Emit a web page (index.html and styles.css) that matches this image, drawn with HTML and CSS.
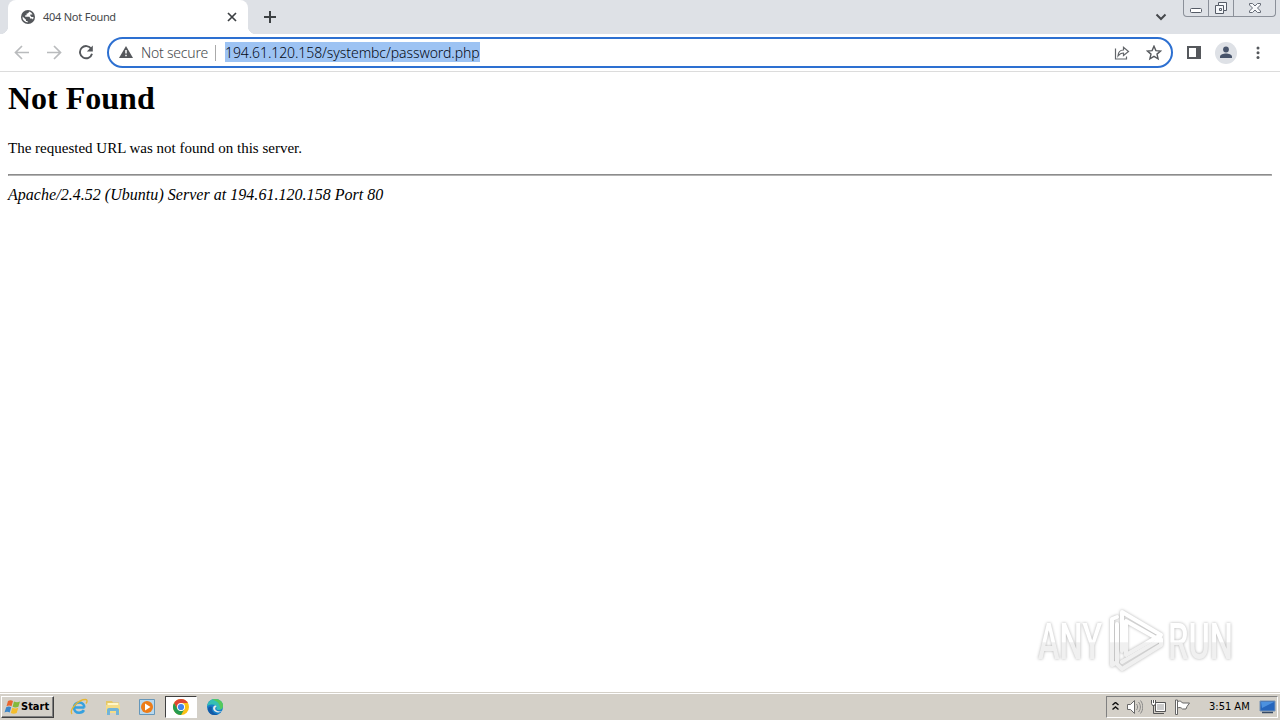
FILE: index.html
```html
<!DOCTYPE html>
<html lang="en">
  <head>
    <meta charset="utf-8">
    <title>404 Not Found</title>
    <link rel="stylesheet" href="styles.css">
  </head>
  <body>
    <div class="tab-strip">
      <div class="tab">
        <svg class="globe" width="14" height="14" viewBox="0 0 14 14"><circle cx="7" cy="7" r="7" fill="#54575b"/><path d="M8 1.600C7.800 3 7 3.600 5.600 3.600v1.600H4.200v1.600h3.600c1 0 1.200.6 1.200 1.600h1.400c.8 0 1.200.4 1.500 1.100A5.500 5.500 0 0 0 12.500 7H10.500L9.300 5.700V4.500h2.300A5.500 5.500 0 0 0 8 1.600z" fill="#fff"/><path d="M1.500 6.500 5 9.800v1.300h1.600v1.400A5.500 5.500 0 0 1 1.500 6.500z" fill="#fff"/></svg>
        <span class="tab-title">404 Not Found</span>
        <svg class="tab-close" width="10" height="10" viewBox="0 0 10 10"><path d="m1 1 8 8m0-8L1 9" stroke="#3c4043" stroke-width="1.7"/></svg>
      </div>
      <svg class="new-tab" width="12" height="12" viewBox="0 0 12 12"><path d="M6 0v12M0 6h12" stroke="#3c4043" stroke-width="2"/></svg>
      <svg class="tab-search" width="12" height="8" viewBox="0 0 12 8"><path d="m1.500 1.500 4.500 4.500 4.500-4.500" fill="none" stroke="#45484c" stroke-width="2"/></svg>
      <div class="window-buttons">
        <span><svg width="13" height="14" viewBox="0 0 13 14"><rect x=".5" y="7.500" width="11" height="4" rx="1" fill="#fff" stroke="#555b66"/></svg></span>
        <span><svg width="14" height="14" viewBox="0 0 14 14"><path d="M4.500 1.500h8v8h-3v3h-8v-8h3z" fill="#f5f7fa" stroke="#555b66"/><path d="M4.500 4.500h5v5M5.500 7.500h2v2h-2z" fill="none" stroke="#555b66"/></svg></span>
        <span><svg width="14" height="12" viewBox="0 0 14 12"><path d="M1.500 1.500h3l2.500 2.500 2.500-2.500h3v1.500L9.500 6l3 3v1.500h-3L7 8l-2.500 2.500h-3V9l3-3-3-3z" fill="#f8f9fb" stroke="#666c77"/></svg></span>
      </div>
    </div>

    <div class="toolbar">
      <div class="nav-buttons">
        <svg width="16" height="16" viewBox="0 0 16 16"><path d="M15 7.500H2M8 1 1.500 7.500 8 14" fill="none" stroke="#b9bbbd" stroke-width="1.7"/></svg>
        <svg width="16" height="16" viewBox="0 0 16 16"><path d="M1 7.500h13M8 1l6.500 6.500L8 14" fill="none" stroke="#b9bbbd" stroke-width="1.7"/></svg>
        <svg width="16" height="16" viewBox="0 0 16 16"><path d="M13.300 4A6.100 6.100 0 1 0 14 8.700" fill="none" stroke="#55585c" stroke-width="1.900"/><path d="M14.800.5v6H8.800z" fill="#55585c"/></svg>
      </div>
      <div class="omnibox">
        <svg class="warning" width="14" height="12" viewBox="0 0 14 12"><path d="M7 0 14 12H0z" fill="#55585c"/><path d="M7 4v3.500M7 8.700v1.500" stroke="#fff" stroke-width="1.500"/></svg>
        <span class="security">Not secure</span>
        <span class="separator"></span>
        <span class="url">194.61.120.158/systembc/password.php</span>
        <svg class="share" width="16" height="16" viewBox="0 0 16 16"><path d="M1.500 3.500V14h11v-2.500M4 11c.2-4 2-6 5.500-6V2.300L14.500 6.500l-5 4V8C7 8 5.500 9 4 11z" fill="none" stroke="#63666a" stroke-width="1.200"/></svg>
        <svg width="16" height="16" viewBox="0 0 16 16"><path d="m8 1.200 1.900 4.400 4.700.4L11 9.100l1.100 4.700L8 11.300l-4.100 2.500L5 9.100 1.400 6l4.700-.4z" fill="none" stroke="#55585c" stroke-width="1.400"/></svg>
      </div>
      <svg class="side-panel" width="14" height="14" viewBox="0 0 14 14"><path d="M1 1h12v11H1z" fill="#fff" stroke="#55585c" stroke-width="2"/><path d="M9 1h4v11H9z" fill="#55585c"/></svg>
      <svg class="avatar" width="22" height="22" viewBox="0 0 22 22"><circle cx="11" cy="11" r="11" fill="#dee1e6"/><circle cx="11" cy="7.500" r="2.900" fill="#48546b"/><path d="M5 16v-1.300c0-2 3.500-3.100 6-3.100s6 1.100 6 3.100V16z" fill="#48546b"/></svg>
      <svg class="menu" width="4" height="14" viewBox="0 0 4 14"><g fill="#55585c"><circle cx="2" cy="2" r="1.500"/><circle cx="2" cy="6.800" r="1.500"/><circle cx="2" cy="11.600" r="1.500"/></g></svg>
    </div>

    <main class="page">
      <h1>Not Found</h1>
      <p>The requested URL was not found on this server.</p>
      <hr>
      <address>Apache/2.4.52 (Ubuntu) Server at 194.61.120.158 Port 80</address>

      <svg class="watermark" width="240" height="90" viewBox="0 0 240 90">
        <defs>
          <linearGradient id="fade" gradientUnits="userSpaceOnUse" x1="0" y1="0" x2="0" y2="76">
            <stop offset=".46" stop-color="#fff"/>
            <stop offset=".47" stop-color="#f0f0f0"/>
          </linearGradient>
        </defs>
        <g class="watermark-text" fill="url(#fade)">
          <text x="8" y="52" textLength="64" lengthAdjust="spacingAndGlyphs">ANY</text>
          <text x="138" y="52" textLength="65" lengthAdjust="spacingAndGlyphs">RUN</text>
        </g>
        <g fill="none" stroke="url(#fade)" stroke-width="4" stroke-linejoin="round" stroke-linecap="round">
          <path d="M87 10l-5 2v46l5-3V17"/>
          <path d="M92 44V5l39 23-3 4-32-18v34l33-19"/>
          <path d="M87 57l5 5 39-24v-6L92 55"/>
        </g>
      </svg>
    </main>

    <div class="taskbar">
      <div class="start">
        <svg width="17" height="16" viewBox="0 0 17 16"><path d="M4 2c2-1.300 3.500-1 5 0L7.500 7.300C6 6.300 4.500 6.200 2.500 7.200z" fill="#e9652d"/><path d="M10 2.500c2 1 4 1 6 0l-1.600 5.200c-2 1-4 1-5.800 0z" fill="#83b93b"/><path d="M2.200 8.300c2-1 3.500-1 5 0L5.700 13.500c-1.700-1-3.400-1-5.200 0z" fill="#3c86c9"/><path d="M8.300 8.800c2 1 4 1 6 0l-1.600 5.200c-2 1-4 1-5.900 0z" fill="#f4bd2c"/></svg>
        <span>Start</span>
      </div>
      <div class="quick-launch">
        <span class="app"><svg width="18" height="18" viewBox="0 0 18 18"><path d="M14.500 9.500H5.200M14.300 9.500c0-3-2-5-5-5s-5.300 2-5.300 5 2 5.200 5.200 5.200c2.300 0 3.800-.8 4.700-2.500" fill="none" stroke="#36a1df" stroke-width="2.600"/><path d="M2 16C-1 12 8 1.500 15.500 1.500c2 0 2 2 .5 4" fill="none" stroke="#e6b631" stroke-width="1.300"/></svg></span>
        <span class="app"><svg width="18" height="18" viewBox="0 0 18 18"><path d="M2 3h6l1 1.500h6V15H2z" fill="#e5c765"/><path d="M3.500 5h11v5h-11z" fill="#fff6c7"/><path d="M2 7h14v8H2z" fill="#f4dc88"/><path d="M3 17v-5c0-2 2-2 3-2h6c2 0 3 .5 3 2v5h-3v-4H6v4z" fill="#72b4d8"/></svg></span>
        <span class="app"><svg width="18" height="18" viewBox="0 0 18 18"><path d="M1.500 1.500h15v15h-15z" fill="#b8d8ee" stroke="#6597ba"/><circle cx="9" cy="9" r="6" fill="#ed7c17"/><path d="m7 5.500 5.500 3.500L7 12.500z" fill="#fff"/></svg></span>
        <span class="app active"><svg width="18" height="18" viewBox="0 0 18 18"><circle cx="9" cy="9" r="8" fill="#fbc116"/><path d="M2.070 5A8 8 0 0 1 15.930 5H9L5.500 11z" fill="#df4634"/><path d="M2.070 5A8 8 0 0 0 9 17l3.500-6L9 13l-3.500-2z" fill="#269b50"/><circle cx="9" cy="9" r="4" fill="#fff"/><circle cx="9" cy="9" r="3.100" fill="#4284ed"/></svg></span>
        <span class="app"><svg width="18" height="18" viewBox="0 0 18 18"><circle cx="9" cy="9" r="8" fill="#167fc9"/><path d="M1.200 8C2 3.500 5 1 9 1c5 0 8 3.200 8 6.500 0 3-2 4.500-4.500 4.500-2 0-2.500-1-2-2 .5-3-4-5-9.300-2z" fill="#35bfb4"/><path d="M9 1c5 0 8 3.200 8 6.500 0 2-1 3.500-2.500 4.200C14 6 12 3 6 1.700z" fill="#55c95b"/><path d="M10.500 8.500c-3 2-.5 5.800 5.500 4.800-2 1.500-5 1.500-7 .2-3-2-2-5.500 0-6 1 0 1.500.5 1.500 1z" fill="#e7eaea"/><path d="M6 9c-1 4 2 7 6 7.300-5 2.200-9-.3-10-4C1.500 9 4 7.500 6 9z" fill="#145aa6"/></svg></span>
      </div>
      <div class="tray">
        <svg width="7" height="10" viewBox="0 0 7 10"><path d="m.5 3 3-2.500 3 2.500m-6 4.500 3-2.500 3 2.500" fill="none" stroke="#111" stroke-width="1.500"/></svg>
        <svg width="17" height="16" viewBox="0 0 17 16"><path d="M1.500 5.500h3l4-4v13l-4-4h-3z" fill="#fff" stroke="#686868"/><path d="M10.500 5c1.500 2 1.500 4 0 6m2-8c2.500 3 2.500 7 0 10m2-11.500c3 4 3 9 0 13" fill="none" stroke="#888"/></svg>
        <svg width="17" height="16" viewBox="0 0 17 16"><path d="M5.500 3.500h10v9h-10z" fill="#ccc" stroke="#555"/><path d="M6.500 4.500h8v7h-8z" fill="none" stroke="#fff"/><path d="M8 14.500h6M3.500 7v7.500H8" fill="none" stroke="#555"/><path d="M1.500 1v3.500l1 2h2l1-2V1M3.500 1v3" fill="#fff" stroke="#555"/></svg>
        <svg width="17" height="16" viewBox="0 0 17 16"><path d="M1.500 1v14.500h2V1z" fill="#fff" stroke="#666"/><path d="M3.500 2.500c3-1 4 0 5 1.500h7l-2.500 3.500L12 10H8.500C7 8.500 5.500 8 3.500 9z" fill="#fff" stroke="#666"/></svg>
        <span class="clock">3:51 AM</span>
        <svg width="17" height="14" viewBox="0 0 17 14"><path d="M1 1h15v10H1z" fill="#2666bd" stroke="#7693b5"/><path d="M2 2h13L3 8z" fill="#4c91df"/><path d="M3 12.500h11" stroke="#364a65" stroke-width="1.500"/></svg>
      </div>
    </div>
  </body>
</html>
```
FILE: styles.css
```css
*, *::before, *::after { box-sizing: border-box; }
body {
  margin: 0;
  width: 1280px;
  height: 720px;
  display: flex;
  flex-direction: column;
  overflow: hidden;
  background: #fff;
  font-family: "DejaVu Sans Condensed", "DejaVu Sans", sans-serif;
}
svg { display: block; flex: none; }

/* Tabs */
.tab-strip {
  height: 34px;
  flex: none;
  display: flex;
  align-items: center;
  padding-left: 8px;
  background: #dee1e6;
}
.tab {
  position: relative;
  width: 240px;
  height: 34px;
  display: flex;
  align-items: center;
  padding: 0 11px 0 13px;
  background: #fff;
  border-radius: 8px 8px 0 0;
}
.tab::before, .tab::after {
  content: "";
  position: absolute;
  bottom: 0;
  width: 8px;
  height: 8px;
}
.tab::before {
  left: -8px;
  background: radial-gradient(circle at 0 0, transparent 8px, #fff 8.5px);
}
.tab::after {
  right: -8px;
  background: radial-gradient(circle at 100% 0, transparent 8px, #fff 8.5px);
}
.tab-title {
  margin-left: 8px;
  padding-bottom: 2px;
  font-family: "Noto Sans", sans-serif;
  font-size: 11px;
  letter-spacing: -0.35px;
  word-spacing: 0.5px;
  white-space: nowrap;
  color: #45484b;
}
.tab-close { margin-left: auto; }
.new-tab { margin-left: 16px; }
.tab-search { margin-left: auto; }
.window-buttons {
  height: 17px;
  width: 93px;
  margin: 0 4px 0 16px;
  align-self: flex-start;
  display: grid;
  grid-template-columns: 24px 25px 1fr;
  border: 1px solid #8b9099;
  border-top: 0;
  border-radius: 0 0 4px 4px;
}
.window-buttons span {
  display: flex;
  align-items: center;
  justify-content: center;
}
.window-buttons span + span { border-left: 1px solid #8b9099; }

/* Address bar */
.toolbar {
  height: 38px;
  flex: none;
  display: flex;
  align-items: center;
  border-bottom: 1px solid #dcdcdc;
  padding: 0 20px 0 14px;
}
.nav-buttons {
  display: flex;
  gap: 16px;
}
.omnibox {
  width: 1066px;
  height: 31px;
  margin-left: 13px;
  display: flex;
  align-items: center;
  padding: 0 9px 0 10px;
  border: 2px solid #2d70d1;
  border-radius: 16px;
  font-family: "Noto Sans", sans-serif;
  font-size: 14px;
  font-weight: 300;
  white-space: nowrap;
}
.warning { margin-bottom: 2px; }
.security {
  margin-left: 8px;
  width: 67px;
  letter-spacing: -0.22px;
  color: #46494d;
}
.separator {
  width: 1px;
  height: 16px;
  margin: 0 9px 0 7px;
  background: #aaa;
}
.url {
  height: 20px;
  width: 255px;
  margin-bottom: 1px;
  line-height: 22px;
  letter-spacing: -0.08px;
  background: #9dc3f3;
  color: #050a14;
}
.share {
  margin-left: auto;
  margin-right: 16px;
}
.side-panel { margin-left: 14px; }
.avatar { margin-left: 14px; }
.menu { margin-left: auto; }

/* Document */
.page {
  position: relative;
  flex: 1;
  padding: 0 8px;
  font-family: "Liberation Serif", serif;
  font-size: 16px;
}
h1 {
  margin: 8px 0 22px;
  font-size: 32px;
  line-height: 37px;
}
p {
  margin: 0 0 17px;
  line-height: 18px;
  font-size: 15px;
}
.page hr {
  margin: 0 0 9px;
  border: 1px solid;
  border-color: #8c8c8c #b4b4b4 #b4b4b4 #8c8c8c;
}
address {
  line-height: 20px;
  letter-spacing: 0.03px;
}
.watermark {
  position: absolute;
  left: 1030px;
  top: 535px;
  overflow: visible;
  filter: drop-shadow(0 0 1.5px rgba(0, 0, 0, 0.3));
}
.watermark-text {
  font-family: Roboto, sans-serif;
  font-size: 50px;
  font-weight: 500;
}

/* Taskbar */
.taskbar {
  height: 28px;
  flex: none;
  display: flex;
  align-items: center;
  padding: 0 2px 0 1px;
  background: #d4d0c8;
  border-top: 1px solid #d4d0c8;
  box-shadow: inset 0 1px #fff;
}
.start {
  width: 53px;
  height: 22px;
  display: flex;
  align-items: center;
  padding-left: 2px;
  border: 1px solid;
  border-color: #fff #404040 #404040 #fff;
  box-shadow: inset -1px -1px #808080;
  font-size: 11px;
  font-weight: bold;
}
.quick-launch {
  display: flex;
  gap: 2px;
  margin-left: 9px;
}
.app {
  width: 32px;
  height: 22px;
  display: flex;
  align-items: center;
  justify-content: center;
}
.app.active {
  border: 1px solid;
  border-color: #404040 #fff #fff #404040;
  background: #fff;
}
.tray {
  width: 172px;
  height: 22px;
  margin-left: auto;
  display: flex;
  align-items: center;
  padding: 0 1px 0 5px;
  border: 1px solid;
  border-color: #808080 #fff #fff #808080;
}
.tray svg + svg { margin-left: 7px; }
.clock {
  width: 40px;
  margin: 0 10px 0 auto;
  font-size: 11px;
  white-space: nowrap;
}
```
